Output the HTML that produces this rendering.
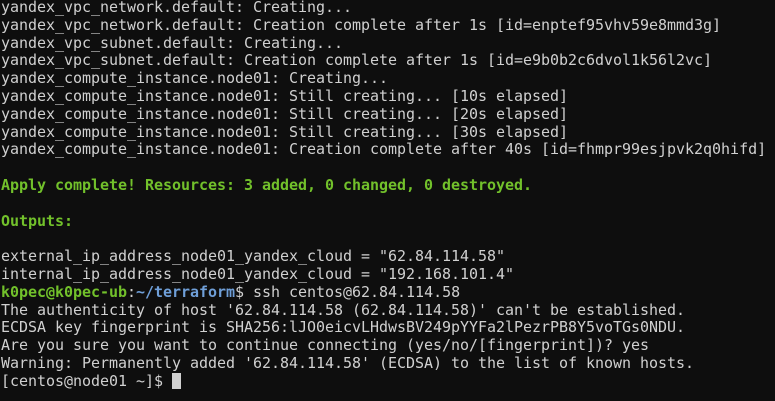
<!DOCTYPE html>
<html><head><meta charset="utf-8"><style>
html,body{margin:0;padding:0;background:#0e0e0e;width:775px;height:401px;overflow:hidden}
pre{margin:0;position:absolute;left:1px;top:-1px;font-family:"DejaVu Sans Mono","Liberation Mono",monospace;font-size:15px;line-height:17.8px;color:#d0d0d0;white-space:pre;letter-spacing:-0.03px}
.g{color:#72c12b;font-weight:bold}
.b{color:#6f9fd8;font-weight:bold}
.c{display:inline-block;width:9px;height:16px;background:#d0d0d0;vertical-align:-3px}
</style></head><body><pre>yandex_vpc_network.default: Creating...
yandex_vpc_network.default: Creation complete after 1s [id=enptef95vhv59e8mmd3g]
yandex_vpc_subnet.default: Creating...
yandex_vpc_subnet.default: Creation complete after 1s [id=e9b0b2c6dvol1k56l2vc]
yandex_compute_instance.node01: Creating...
yandex_compute_instance.node01: Still creating... [10s elapsed]
yandex_compute_instance.node01: Still creating... [20s elapsed]
yandex_compute_instance.node01: Still creating... [30s elapsed]
yandex_compute_instance.node01: Creation complete after 40s [id=fhmpr99esjpvk2q0hifd]

<span class="g">Apply complete! Resources: 3 added, 0 changed, 0 destroyed.</span>

<span class="g">Outputs:</span>

external_ip_address_node01_yandex_cloud = "62.84.114.58"
internal_ip_address_node01_yandex_cloud = "192.168.101.4"
<span class="g">k0pec@k0pec-ub</span>:<span class="b">~/terraform</span>$ ssh centos@62.84.114.58
The authenticity of host '62.84.114.58 (62.84.114.58)' can't be established.
ECDSA key fingerprint is SHA256:lJO0eicvLHdwsBV249pYYFa2lPezrPB8Y5voTGs0NDU.
Are you sure you want to continue connecting (yes/no/[fingerprint])? yes
Warning: Permanently added '62.84.114.58' (ECDSA) to the list of known hosts.
[centos@node01 ~]$ <span class="c"></span></pre></body></html>
